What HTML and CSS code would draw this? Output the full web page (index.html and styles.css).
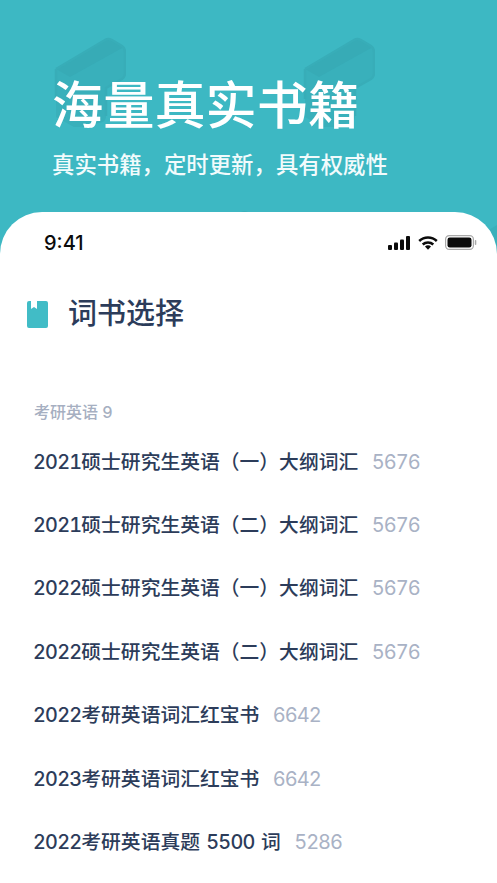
FILE: index.html
```html
<!DOCTYPE html>
<html lang="zh-CN">
<head>
<meta charset="utf-8">
<title>词书选择</title>
<link rel="stylesheet" href="styles.css">
</head>
<body>
<div class="page">
  <header class="hero">
    <svg class="deco deco-a" viewBox="0 0 72 90"><path d="M2 32 51 3q3-2 7 0l10 6q3 2 3 6v21q0 4-3 6l-16 9v28q0 4-3 6L30 90H20L2 80Z" fill="#39b0bb"/><path d="M16 40 70 10 58 3q-3-2-7 0L2 32Z" fill="#37abb6"/><path d="M2 32 51 3q3-2 7 0l10 6q3 2 3 6v21q0 4-3 6l-16 9v28M2 32v30" fill="none" stroke="#38adb8" stroke-width="2.500"/></svg>
    <svg class="deco deco-b" viewBox="0 0 72 90"><path d="M2 32 51 3q3-2 7 0l10 6q3 2 3 6v21q0 4-3 6l-16 9v28q0 4-3 6L30 90H20L2 80Z" fill="#39b0bb"/><path d="M16 40 70 10 58 3q-3-2-7 0L2 32Z" fill="#37abb6"/><path d="M2 32 51 3q3-2 7 0l10 6q3 2 3 6v21q0 4-3 6l-16 9v28M2 32v30" fill="none" stroke="#38adb8" stroke-width="2.500"/></svg>
    <svg class="deco deco-c" viewBox="0 0 72 90"><path d="M2 32 51 3q3-2 7 0l10 6q3 2 3 6v21q0 4-3 6l-16 9v28q0 4-3 6L30 90H20L2 80Z" fill="#39b0bb"/></svg>
    <svg class="deco deco-d" viewBox="0 0 72 90"><path d="M2 32 51 3q3-2 7 0l10 6q3 2 3 6v21q0 4-3 6l-16 9v28q0 4-3 6L30 90H20L2 80Z" fill="#39b0bb"/></svg>
    <h1 class="hero-title">海量真实书籍</h1>
    <p class="hero-sub">真实书籍，定时更新，具有权威性</p>
  </header>
  <main class="card">
    <div class="status">
      <span class="time">9:41</span>
      <span class="status-icons">
        <svg class="signal" viewBox="0 0 23 14"><rect x="0" y="9" width="4" height="5" rx="1"/><rect x="6" y="6.5" width="4" height="7.5" rx="1"/><rect x="12" y="3.5" width="4" height="10.5" rx="1"/><rect x="18" y="0" width="4" height="14" rx="1"/></svg>
        <svg class="wifi" viewBox="0 0 20 14"><path class="arc" d="M1.200 5A12.800 12.800 0 0 1 18.800 5"/><path class="arc" d="M4.700 8.500A7.800 7.800 0 0 1 15.300 8.500"/><path d="M10 9.300c-1.100 0-2.200.4-3 1.200l3 3.300 3-3.300a4.400 4.400 0 0 0-3-1.200Z"/></svg>
        <svg class="battery" viewBox="0 0 32 15"><rect x=".6" y=".6" width="27.800" height="13.800" rx="3.600" fill="none" stroke="#a9a9a9" stroke-width="1.200"/><rect x="2.500" y="2.500" width="24" height="10" rx="2.200"/><rect x="29.800" y="5" width="1.500" height="5" rx=".7" fill="#a9a9a9"/></svg>
      </span>
    </div>
    <div class="section-head">
      <svg class="book" viewBox="0 0 21 27"><path d="M2 0h2v8l3-2 3 2V0h9a2 2 0 0 1 2 2v23a2 2 0 0 1-2 2H2a2 2 0 0 1-2-2V2a2 2 0 0 1 2-2Z" fill="#41bcc6"/></svg>
      <h2 class="section-title">词书选择</h2>
    </div>
    <div class="group-label">考研英语 9</div>
    <ul class="list">
      <li class="row"><span class="name"><span class="num">2021</span>硕士研究生英语（一）大纲词汇</span><span class="count">5676</span></li>
      <li class="row"><span class="name"><span class="num">2021</span>硕士研究生英语（二）大纲词汇</span><span class="count">5676</span></li>
      <li class="row"><span class="name"><span class="num">2022</span>硕士研究生英语（一）大纲词汇</span><span class="count">5676</span></li>
      <li class="row"><span class="name"><span class="num">2022</span>硕士研究生英语（二）大纲词汇</span><span class="count">5676</span></li>
      <li class="row"><span class="name"><span class="num">2022</span>考研英语词汇红宝书</span><span class="count">6642</span></li>
      <li class="row"><span class="name"><span class="num">2023</span>考研英语词汇红宝书</span><span class="count">6642</span></li>
      <li class="row"><span class="name"><span class="num">2022</span>考研英语真题 <span class="num">5500</span> 词</span><span class="count">5286</span></li>
    </ul>
  </main>
</div>
</body>
</html>
```
FILE: styles.css
```css
* { box-sizing: border-box; }
html, body { margin: 0; padding: 0; }
body {
  width: 497px;
  height: 883px;
  overflow: hidden;
  background: #3db8c3;
  font-family: Inter, "Noto Sans CJK SC", sans-serif;
  font-variant-numeric: tabular-nums;
}
.page { height: 883px; display: flex; flex-direction: column; overflow: hidden; }
.hero {
  position: relative;
  height: 212px;
  flex: none;
  padding: 71px 0 0 52px;
  background: #3db8c3;
}
.deco { position: absolute; width: 72px; height: 90px; }
.deco-a { left: 54px; top: 37px; }
.deco-b { left: 303px; top: 37px; }
.deco-c { left: 468px; top: 209px; }
.deco-d { left: 190px; top: 209px; }
.hero-title {
  position: relative;
  margin: 0;
  font-size: 51.200px;
  line-height: 68px;
  font-weight: 500;
  color: #fff;
}
.hero-sub {
  position: relative;
  margin: 10px 0 0;
  font-size: 22.400px;
  line-height: 32px;
  font-weight: 500;
  color: #f2fbfc;
}
.card {
  position: relative;
  flex: 1;
  background: #fff;
  border-radius: 42px 42px 0 0;
}
.status {
  height: 60px;
  padding: 18px 20px 0 44px;
  display: flex;
  justify-content: space-between;
  align-items: flex-start;
}
.time {
  font-size: 20px;
  line-height: 26px;
  font-weight: 500;
  color: #0b0b0b;
  font-variant-numeric: normal;
}
.status-icons { display: flex; align-items: center; gap: 7px; height: 25px; }
.signal { width: 23px; height: 14px; fill: #0b0b0b; }
.wifi { width: 20px; height: 14px; fill: #0b0b0b; }
.arc { fill: none; stroke: #0b0b0b; stroke-width: 2.500; }
.battery { width: 32px; height: 15px; fill: #0b0b0b; }
.section-head {
  display: flex;
  align-items: center;
  gap: 20px;
  height: 44px;
  padding-left: 27px;
  margin-top: 20px;
}
.book { width: 21px; height: 27px; flex: none; }
.section-title {
  margin: 0;
  font-size: 29px;
  line-height: 44px;
  font-weight: 500;
  color: #2c3c5a;
}
.group-label {
  margin-top: 64px;
  padding-left: 34px;
  font-size: 16px;
  line-height: 24px;
  font-weight: 500;
  color: #a6afc1;
}
.list { list-style: none; margin: 6px 0 0; padding: 0 0 0 33px; }
.row {
  height: 63.400px;
  display: flex;
  align-items: center;
  gap: 13.500px;
}
.name { font-size: 19.800px; line-height: 28px; font-weight: 500; word-spacing: 1px; color: #2c3c5a; white-space: nowrap; }
.num { font-weight: 450; letter-spacing: -.75px; }
.count { font-size: 20px; line-height: 28px; letter-spacing: -1px; color: #a9b2c5; }
```
